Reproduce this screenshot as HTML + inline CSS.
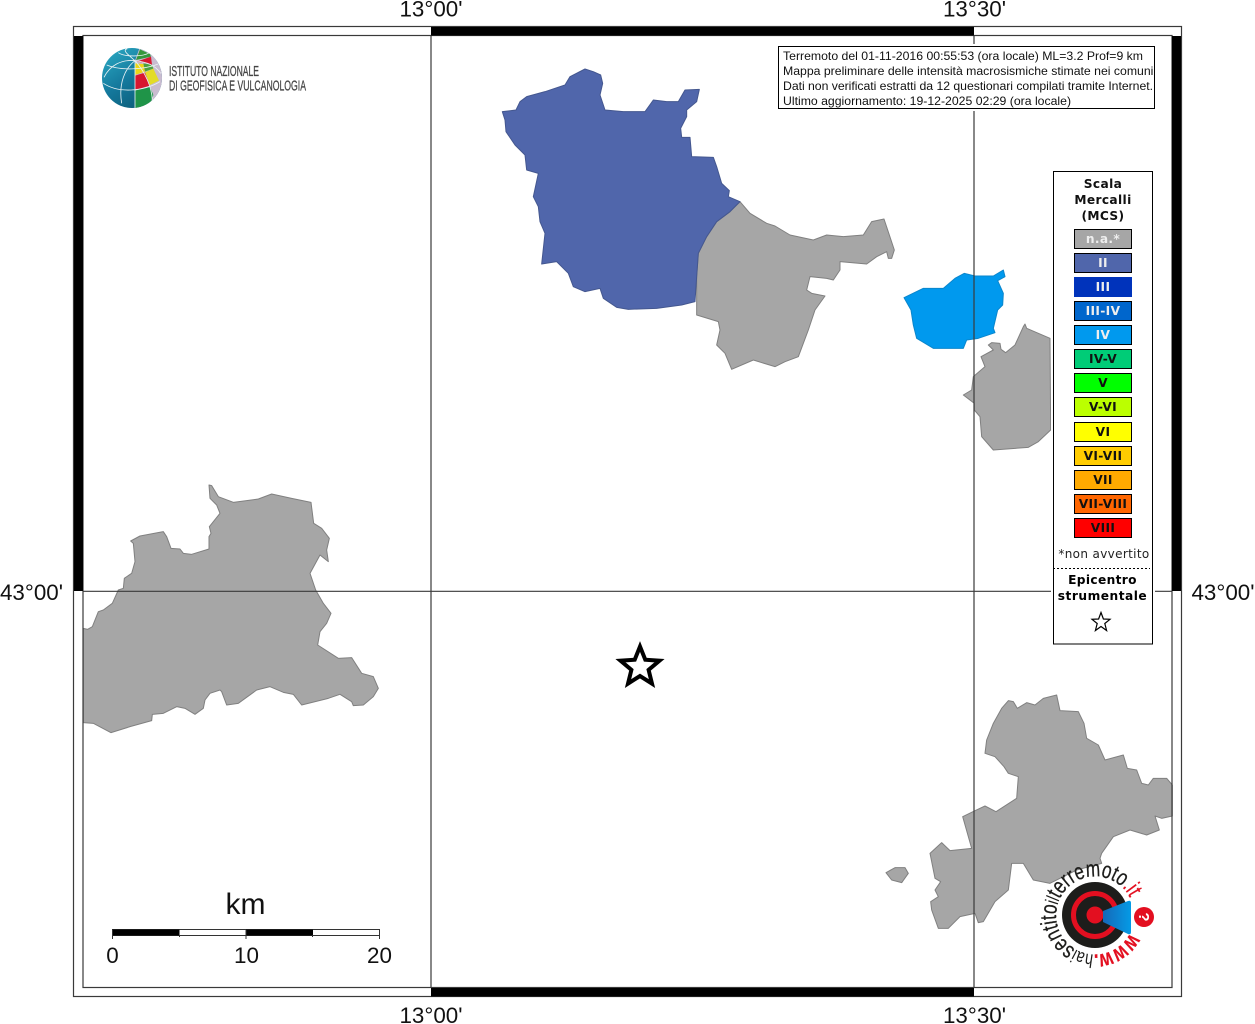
<!DOCTYPE html>
<html><head><meta charset="utf-8"><title>Mappa</title>
<style>html,body{margin:0;padding:0;background:#fff;width:1255px;height:1024px;overflow:hidden}svg{display:block}
.s{font:700 12.2px "DejaVu Sans",sans-serif;text-anchor:middle;letter-spacing:.35px}
.l{font:22.4px "Liberation Sans",sans-serif;fill:#111;text-anchor:middle}
.i{font:12.25px "Liberation Sans",sans-serif;fill:#111}
.g{fill:#a6a6a6;stroke:#808080;stroke-width:3;stroke-linejoin:round}
</style></head><body>
<svg width="1255" height="1024" viewBox="0 0 1255 1024" xmlns="http://www.w3.org/2000/svg">
<defs>
<clipPath id="gc"><circle cx="126" cy="114" r="90"/></clipPath>
<clipPath id="ic"><rect x="779" y="47" width="375" height="61"/></clipPath>
<linearGradient id="t" x1="0" y1="0" x2=".7" y2="1"><stop offset="0" stop-color="#2eb0c8"/><stop offset=".55" stop-color="#14789c"/><stop offset="1" stop-color="#0b5a74"/></linearGradient>
<linearGradient id="b" x1="0" y1="0" x2="1" y2="0"><stop offset="0" stop-color="#1668b8"/><stop offset="1" stop-color="#049be6"/></linearGradient>
</defs>
<g transform="translate(75,475) scale(.33333)"><polygon class="g" points="25,460 38,463 52,455 70,410 85,405 112,385 130,345 145,340 148,310 170,295 180,260 175,205 167,198 195,183 265,170 275,185 288,220 315,222 325,235 350,238 402,222 402,185 408,175 403,155 435,115 425,90 405,70 402,30 410,32 430,65 475,82 550,72 590,57 650,70 708,82 716,145 740,160 763,190 755,225 760,260 735,240 705,295 722,345 745,385 768,415 755,445 735,470 728,510 790,550 830,548 860,595 895,605 910,640 895,665 865,690 835,692 830,680 795,658 760,670 680,690 655,658 625,652 585,635 545,645 490,685 455,690 440,650 435,645 405,655 390,675 385,700 360,718 330,700 305,695 265,715 232,718 230,737 165,755 108,773 55,745 25,743"/></g>
<g transform="translate(490,60) scale(.33333)">
<polygon class="g" points="750,425 780,460 830,490 855,498 900,525 970,540 1010,525 1060,530 1120,525 1145,485 1182,477 1213,570 1205,595 1195,595 1190,575 1160,590 1130,612 1050,605 1050,630 1030,660 1010,655 960,650 950,690 965,700 1005,708 975,750 955,810 925,890 885,905 855,920 790,900 725,928 705,880 680,855 690,810 685,785 620,765 620,725 620,650 625,580 650,530 680,485 720,455"/>
<polygon fill="#5066ab" stroke="#44578f" stroke-width="3" stroke-linejoin="round" points="37,155 78,150 90,125 110,110 165,95 225,75 240,50 285,27 310,35 332,45 338,70 330,105 345,150 400,155 465,155 490,120 530,125 565,125 585,90 628,88 620,125 590,150 590,170 572,205 575,232 600,232 605,290 670,292 680,320 695,370 718,392 715,410 750,425 720,455 680,485 650,530 625,580 620,650 615,725 575,735 500,745 415,748 380,742 340,715 330,685 285,695 250,680 235,640 200,605 155,612 165,520 150,485 145,440 130,410 145,340 110,330 105,285 75,255 48,215 45,180"/>
</g>
<g transform="translate(895,260) scale(.33333)">
<polygon fill="#0099ee" stroke="#0a86cc" stroke-width="3" stroke-linejoin="round" points="27,113 85,85 145,85 180,55 208,40 240,48 295,48 325,30 330,50 308,62 325,100 323,135 308,150 295,205 300,218 250,235 215,240 205,265 130,265 115,265 65,235 55,195 48,150"/>
<polygon class="g" points="390,192 395,205 465,235 467,510 430,545 400,562 295,570 260,530 255,470 238,450 238,430 205,405 230,390 235,350 270,320 258,290 295,270 280,255 290,248 315,250 318,268 332,278 360,255 385,200"/>
</g>
<g transform="translate(880,690) scale(.33333)">
<polygon class="g" points="385,32 400,35 412,55 440,38 465,45 490,25 530,15 540,62 595,65 612,100 620,145 655,165 675,210 730,195 742,235 770,240 785,280 805,285 820,265 860,265 877,285 877,378 845,385 825,378 838,420 800,435 750,420 700,440 665,490 660,505 665,520 590,540 510,580 460,570 430,520 395,520 385,600 345,635 310,695 295,698 285,670 240,680 205,715 175,715 155,660 152,635 175,620 165,600 182,575 165,565 150,490 185,458 210,482 275,475 248,380 285,362 315,348 348,365 410,325 415,260 385,250 372,230 345,200 315,190 320,150 340,100 365,55"/>
<polygon class="g" points="18,548 45,533 75,533 85,550 65,578 35,570"/>
</g>
<g fill="none" stroke="#3a3a3a" stroke-width="1.2">
<rect x="73.500" y="26.500" width="1108" height="970"/>
<rect x="83" y="35.500" width="1089" height="952"/>
<path d="M431 36V987M974 36V987M83 591.300H1172"/>
</g>
<g fill="#000">
<rect x="431" y="27" width="543" height="8.500"/><rect x="431" y="988" width="543" height="8.500"/>
<rect x="74" y="36" width="9" height="555"/><rect x="1172" y="36" width="9" height="555"/>
</g>
<text class="l" x="431" y="16.500">13°00'</text><text class="l" x="974.500" y="16.500">13°30'</text>
<text class="l" x="431" y="1023">13°00'</text><text class="l" x="974.500" y="1023">13°30'</text>
<text class="l" x="31.500" y="600">43°00'</text><text class="l" x="1223" y="600">43°00'</text>
<polygon points="640,646.500 645.300,659.700 659.500,660.700 648.600,669.800 652,683.600 640,676 628,683.600 631.400,669.800 620.500,660.700 634.700,659.700" fill="#fff" stroke="#000" stroke-width="4"/>
<text x="245.500" y="914" font-family="Liberation Sans" font-size="30" text-anchor="middle" fill="#111">km</text>
<rect x="112.500" y="929.500" width="267" height="6" fill="#fff" stroke="#333"/>
<rect x="112.500" y="929.500" width="67" height="6" fill="#000"/><rect x="246" y="929.500" width="67" height="6" fill="#000"/>
<path d="M112.500 930V939M246 930V939M379.500 930V939M179.500 935V937M312.500 935V937" stroke="#333" fill="none"/>
<text class="l" x="112.500" y="963">0</text><text class="l" x="246.500" y="963">10</text><text class="l" x="379.500" y="963">20</text>
<g transform="translate(90,40) scale(.33333)">
<g clip-path="url(#gc)">
<rect x="30" y="20" width="195" height="190" fill="url(#t)"/>
<path d="M135 62L150 20H225V210H135Z" fill="#c9bcd0"/>
<path d="M138 60L150 28L180 42L183 50Z" fill="#35983c"/>
<path d="M140 65L183 50L186 74L160 68Z" fill="#d8172f"/>
<path d="M135 70L160 72L165 95L135 105Z" fill="#ecd817"/>
<path d="M160 70L186 74L190 86L165 95Z" fill="#4da13e"/>
<path d="M165 97L190 86L207 122L180 135Z" fill="#e3dc28"/>
<path d="M135 107L165 98L180 137L135 150Z" fill="#d8172f"/>
<path d="M135 152L180 140L190 165L180 195L135 210Z" fill="#1f9448"/>
<path d="M135 62L135 205M135 62C105 85 85 130 95 190M135 62C95 58 60 75 42 112M135 62C115 45 95 30 112 26M135 62C165 95 185 140 187 180M135 62C170 66 195 75 212 100M50 75C90 92 160 90 205 72M40 130C85 160 160 155 210 125M85 38C105 52 160 50 178 38" fill="none" stroke="#e8f2f4" stroke-width="2.500"/>
</g>
</g>
<text x="169" y="76" font-family="Liberation Sans" font-size="14.500" fill="#444" stroke="#444" stroke-width=".25" textLength="90" lengthAdjust="spacingAndGlyphs">ISTITUTO NAZIONALE</text>
<text x="169" y="90.500" font-family="Liberation Sans" font-size="14.500" fill="#444" stroke="#444" stroke-width=".25" textLength="137" lengthAdjust="spacingAndGlyphs">DI GEOFISICA E VULCANOLOGIA</text>
<rect x="776" y="44" width="381" height="67" fill="#fff"/>
<rect x="778.500" y="46.500" width="376" height="62" fill="#fff" stroke="#000"/>
<g clip-path="url(#ic)">
<text class="i" x="783" y="60">Terremoto del 01-11-2016 00:55:53 (ora locale) ML=3.2 Prof=9 km</text>
<text class="i" x="783" y="75">Mappa preliminare delle intensità macrosismiche stimate nei comuni</text>
<text class="i" x="783" y="90" textLength="370">Dati non verificati estratti da 12 questionari compilati tramite Internet.</text>
<text class="i" x="783" y="105">Ultimo aggiornamento: 19-12-2025 02:29 (ora locale)</text>
</g>
<rect x="1051" y="168" width="104" height="479" fill="#fff"/>
<rect x="1053.500" y="171.500" width="99" height="472.500" fill="#fff" stroke="#000"/>
<g fill="#111"><text class="s" x="1103" y="188">Scala</text><text class="s" x="1103" y="204">Mercalli</text><text class="s" x="1103" y="220">(MCS)</text></g>
<g stroke="#000" stroke-width="1">
<rect x="1074.500" y="229.500" width="57" height="19" fill="#a6a6a6"/>
<rect x="1074.500" y="253.500" width="57" height="19" fill="#5066ab"/>
<rect x="1074.500" y="277.500" width="57" height="19" fill="#0033bb" stroke="#0033bb"/>
<rect x="1074.500" y="301.500" width="57" height="19" fill="#0066cc"/>
<rect x="1074.500" y="325.500" width="57" height="19" fill="#0099ee"/>
<rect x="1074.500" y="349.500" width="57" height="19" fill="#00cc77"/>
<rect x="1074.500" y="373.500" width="57" height="19" fill="#00ff00"/>
<rect x="1074.500" y="397.500" width="57" height="19" fill="#bbff00"/>
<rect x="1074.500" y="422.500" width="57" height="19" fill="#ffff00"/>
<rect x="1074.500" y="446.500" width="57" height="19" fill="#ffcc00"/>
<rect x="1074.500" y="470.500" width="57" height="19" fill="#ffaa00"/>
<rect x="1074.500" y="494.500" width="57" height="19" fill="#ff6600"/>
<rect x="1074.500" y="518.500" width="57" height="19" fill="#ff0000"/>
</g>
<g fill="#eee"><text class="s" x="1103" y="243">n.a.*</text><text class="s" x="1103" y="267">II</text><text class="s" x="1103" y="291">III</text><text class="s" x="1103" y="315">III-IV</text><text class="s" x="1103" y="339">IV</text></g>
<g fill="#111"><text class="s" x="1103" y="363">IV-V</text><text class="s" x="1103" y="387">V</text><text class="s" x="1103" y="411">V-VI</text><text class="s" x="1103" y="436">VI</text><text class="s" x="1103" y="460">VI-VII</text><text class="s" x="1103" y="484">VII</text><text class="s" x="1103" y="508">VII-VIII</text><text class="s" x="1103" y="532">VIII</text></g>
<text x="1104" y="558" font-family="DejaVu Sans" font-size="12" letter-spacing=".35" text-anchor="middle" fill="#222">*non avvertito</text>
<path d="M1053 568.500H1150" stroke="#000" stroke-dasharray="2 2"/>
<text class="s" x="1102.500" y="584">Epicentro</text><text class="s" x="1102.500" y="600" style="letter-spacing:.5px">strumentale</text>
<polygon points="1101,612.500 1103.400,619 1110,619.300 1104.800,623.500 1106.600,630.500 1101,626.500 1095.400,630.500 1097.200,623.500 1092,619.300 1098.600,619" fill="#fff" stroke="#000" stroke-width="1.200"/>
<circle cx="1095" cy="915" r="33" fill="#1d1d1b"/>
<circle cx="1095" cy="915" r="21.500" fill="none" stroke="#e30f20" stroke-width="5"/>
<circle cx="1095" cy="915" r="8.500" fill="#e30f20"/>
<path d="M1103 911L1128 901Q1131 900 1131 903V932Q1131 935 1128 934L1103 922Z" fill="url(#b)"/>
<circle cx="1144" cy="917" r="10" fill="#e30f20"/>
<text x="1144" y="922" font-family="Liberation Sans" font-weight="700" font-size="15" text-anchor="middle" fill="#fff" transform="rotate(90 1144 917)">?</text>
<path id="arc" d="M1130 933A39 39 0 1 1 1132.700 904.900" fill="none"/>
<text font-family="'Liberation Sans',sans-serif" font-size="23" fill="#1d1d1b" stroke="#1d1d1b" stroke-width=".25"><textPath href="#arc" textLength="208" lengthAdjust="spacingAndGlyphs"><tspan fill="#e30f20" stroke="#e30f20" font-weight="700">www.</tspan><tspan font-size="19" stroke="none">hai</tspan>sentito<tspan font-size="19" stroke="none">il</tspan>terremoto<tspan fill="#e30f20" stroke="#e30f20">.it</tspan></textPath></text>
</svg>
</body></html>
